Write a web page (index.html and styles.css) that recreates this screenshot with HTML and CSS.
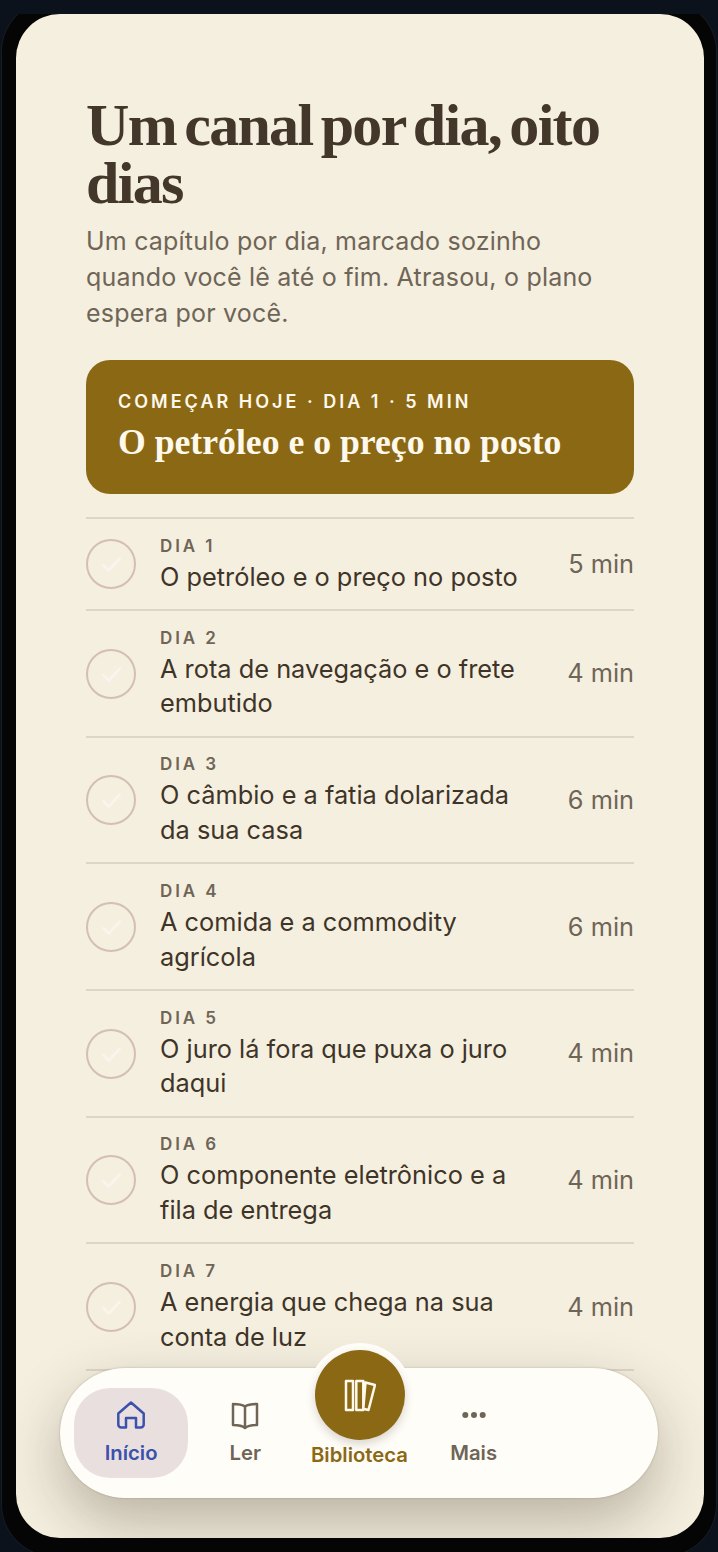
FILE: index.html
```html
<!DOCTYPE html>
<html lang="pt-BR">
<head>
<meta charset="utf-8">
<title>Um canal por dia, oito dias</title>
<link rel="stylesheet" href="styles.css">
</head>
<body>
<div class="stage">
<div class="device">
  <main class="screen">
    <div class="content">
      <h1 class="title">Um canal por dia, oito dias</h1>
      <p class="lede">Um capítulo por dia, marcado sozinho quando você lê até o fim. Atrasou, o plano espera por você.</p>
      <a class="cta">
        <span class="cta-kicker">COMEÇAR HOJE · DIA 1 · 5 MIN</span>
        <span class="cta-title">O petróleo e o preço no posto</span>
      </a>
      <ul class="days">
        <li class="day"><span class="check"><svg viewBox="0 0 24 24"><path d="M5 13l5 5 10-11"/></svg></span><div class="day-body"><span class="day-label">DIA 1</span><span class="day-name">O petróleo e o preço no posto</span></div><span class="day-min">5 min</span></li>
        <li class="day"><span class="check"><svg viewBox="0 0 24 24"><path d="M5 13l5 5 10-11"/></svg></span><div class="day-body"><span class="day-label">DIA 2</span><span class="day-name">A rota de navegação e o frete embutido</span></div><span class="day-min">4 min</span></li>
        <li class="day"><span class="check"><svg viewBox="0 0 24 24"><path d="M5 13l5 5 10-11"/></svg></span><div class="day-body"><span class="day-label">DIA 3</span><span class="day-name">O câmbio e a fatia dolarizada da sua casa</span></div><span class="day-min">6 min</span></li>
        <li class="day"><span class="check"><svg viewBox="0 0 24 24"><path d="M5 13l5 5 10-11"/></svg></span><div class="day-body"><span class="day-label">DIA 4</span><span class="day-name">A comida e a commodity agrícola</span></div><span class="day-min">6 min</span></li>
        <li class="day"><span class="check"><svg viewBox="0 0 24 24"><path d="M5 13l5 5 10-11"/></svg></span><div class="day-body"><span class="day-label">DIA 5</span><span class="day-name">O juro lá fora que puxa o juro daqui</span></div><span class="day-min">4 min</span></li>
        <li class="day"><span class="check"><svg viewBox="0 0 24 24"><path d="M5 13l5 5 10-11"/></svg></span><div class="day-body"><span class="day-label">DIA 6</span><span class="day-name">O componente eletrônico e a fila de entrega</span></div><span class="day-min">4 min</span></li>
        <li class="day"><span class="check"><svg viewBox="0 0 24 24"><path d="M5 13l5 5 10-11"/></svg></span><div class="day-body"><span class="day-label">DIA 7</span><span class="day-name">A energia que chega na sua conta de luz</span></div><span class="day-min">4 min</span></li>
      </ul>
    </div>
    <nav class="nav">
      <a class="tab tab-active">
        <svg class="tab-icon" viewBox="0 0 30 30"><path d="M2.300 13.500L15 2.500l12.700 11v11a3 3 0 0 1-3 3h-4.700v-9.500H10v9.500H5.300a3 3 0 0 1-3-3z"/></svg>
        <span>Início</span>
      </a>
      <a class="tab">
        <svg class="tab-icon" viewBox="0 0 30 30"><path d="M15 6.500C12.500 4.800 8 4 3 4v21c5 0 9.500 .8 12 3 2.500-2.200 7-3 12-3V4c-5 0-9.500 .8-12 2.500zM15 6.500V28"/></svg>
        <span>Ler</span>
      </a>
      <a class="tab tab-lib">
        <span class="fab"><svg viewBox="0 0 32 33"><path d="M2 2h7v29H2zM12.300 2h7v29h-7zM21.500 3.500l9.500 2.500-6.500 25-5.200-1.300z"/></svg></span>
        <span>Biblioteca</span>
      </a>
      <a class="tab">
        <svg class="tab-icon tab-dots" viewBox="0 0 30 30"><circle cx="6.300" cy="15" r="3"/><circle cx="15" cy="15" r="3"/><circle cx="23.700" cy="15" r="3"/></svg>
        <span>Mais</span>
      </a>
    </nav>
  </main>
</div>
</div>
</body>
</html>
```

FILE: styles.css
```css
* { box-sizing: border-box; }
html, body { margin: 0; height: 100%; }
body {
  background: #0c121c;
  overflow: hidden;
  font-family: Inter, "Liberation Sans", sans-serif;
  padding-top: 14px;
}
.stage {
  height: 1538px;
  padding: 0 2px;
  overflow: hidden;
}
.device {
  height: 1556px;
  margin-top: -14px;
  padding: 14px 14px 0;
  background: #050505;
  border-radius: 52px;
  box-shadow: 0 0 0 1px #171c25;
}
.screen {
  position: relative;
  width: 688px;
  height: 1524px;
  background: #f5efe0;
  border-radius: 44px;
  overflow: hidden;
}
.content { padding: 82px 70px 0; }
.title {
  margin: 0;
  font-family: "Liberation Serif", serif;
  font-weight: 700;
  font-size: 60px;
  line-height: 58px;
  letter-spacing: -1.700px;
  word-spacing: -5px;
  color: #43362a;
}
.lede {
  max-width: 520px;
  margin: 11px 0 0;
  font-size: 25px;
  line-height: 36px;
  letter-spacing: .2px;
  color: #6f6557;
}
.cta {
  display: flex;
  flex-direction: column;
  gap: 6px;
  height: 134px;
  margin-top: 29px;
  padding: 29px 32px;
  background: #8b6914;
  border-radius: 24px;
  color: #fff8ec;
}
.cta-kicker {
  font-size: 18px;
  line-height: 26px;
  font-weight: 600;
  letter-spacing: 3px;
}
.cta-title {
  font-family: "Liberation Serif", serif;
  font-weight: 700;
  font-size: 35.700px;
  line-height: 42px;
}
.days { list-style: none; margin: 23px 0 0; padding: 0; border-top: 2px solid #ddd6c6; }
.day {
  display: flex;
  align-items: center;
  padding: 15.500px 0 14.830px;
  border-bottom: 2px solid #ddd6c6;
}
.check {
  flex: none;
  width: 50px;
  height: 50px;
  border: 2px solid #d4bfb2;
  border-radius: 50%;
  display: flex;
  align-items: center;
  justify-content: center;
}
.check svg { width: 26px; height: 26px; fill: none; stroke: #faf5ec; stroke-width: 2.500; stroke-linecap: round; stroke-linejoin: round; }
.day-body { flex: 1; min-width: 0; margin-left: 24px; padding-right: 40px; }
.day-label {
  display: block;
  margin-bottom: 3px;
  font-size: 17px;
  line-height: 22px;
  font-weight: 600;
  letter-spacing: 2.900px;
  color: #6f6557;
}
.day-name {
  display: block;
  font-size: 25.350px;
  line-height: 34.670px;
  color: #3f3428;
}
.day-min { flex: none; padding-bottom: 2px; font-size: 25.350px; color: #6f6557; }
.nav {
  position: absolute;
  left: 44px;
  right: 46px;
  bottom: 40px;
  height: 130px;
  padding: 20px 14px;
  display: grid;
  grid-template-columns: repeat(4, 114.200px);
  background: #fffdf8;
  border-radius: 65px;
  box-shadow: 0 0 2px rgba(90,80,60,.4), 0 24px 60px rgba(60,50,30,.32);
  color: #6f6557;
  font-size: 20.300px;
  font-weight: 600;
}
.tab {
  display: flex;
  flex-direction: column;
  align-items: center;
  justify-content: center;
  gap: 10px;
  height: 90px;
  padding-bottom: 2px;
  border-radius: 36px;
}
.tab-icon { width: 30px; height: 30px; fill: none; stroke: currentColor; stroke-width: 2.500; stroke-linejoin: round; }
.tab-dots { fill: currentColor; stroke: none; }
.tab-active { background: #e9dfdf; color: #3b51ac; }
.tab-lib { color: #8b6914; justify-content: flex-end; position: relative; padding-bottom: 11px; }
.fab {
  position: absolute;
  top: -38px;
  left: 12.500px;
  width: 90px;
  height: 90px;
  border-radius: 50%;
  background: #8b6914;
  box-shadow: 0 4px 10px rgba(60,50,30,.2), 0 0 0 7px #fffdf8;
  display: flex;
  align-items: center;
  justify-content: center;
}
.fab svg { width: 32px; height: 33px; fill: none; stroke: #fff8ec; stroke-width: 2.500; stroke-linejoin: round; }
```
